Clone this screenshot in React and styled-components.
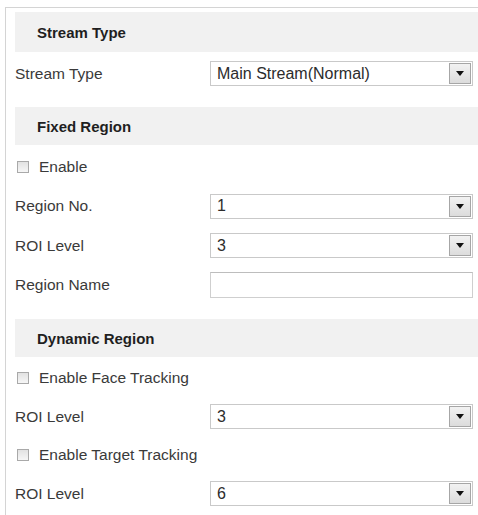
import React from 'react'
import styled, { createGlobalStyle } from 'styled-components'

const GlobalStyle = createGlobalStyle`
    html, body {
        margin: 0;
        padding: 0;
        background: #ffffff;
    }
    body {
        font-family: "Liberation Sans", Arial, sans-serif;
        overflow: hidden;
    }
`

const Page = styled.div`
    width: 478px;
    height: 515px;
    overflow: hidden;
    padding-top: 7px;
    box-sizing: border-box;
`

const Frame = styled.div`
    margin-left: 5px;
    border-top: 1px solid #d4d4d4;
    border-left: 1px solid #d4d4d4;
    padding: 4px 0 0 9px;
    height: 100%;
    box-sizing: border-box;
`

const Section = styled.div`
    margin-bottom: ${props => props.gap || 0}px;
`

const Header = styled.div`
    height: ${props => props.h || 39}px;
    background: #f1f1f1;
    display: flex;
    align-items: center;
    padding-left: 22px;
    font-size: 15px;
    font-weight: 700;
    color: #1f1f1f;
    margin-bottom: 2px;
`

const Row = styled.div`
    height: ${props => props.h || 39}px;
    display: flex;
    align-items: center;
    padding-right: 5px;
`

const Label = styled.span`
    width: 195px;
    font-size: 15.5px;
    color: #3a3a3a;
`

const CheckRow = styled.label`
    display: flex;
    align-items: center;
    font-size: 15.5px;
    color: #3a3a3a;
`

const Box = styled.span`
    width: 10px;
    height: 10px;
    margin: 0 10px 0 2px;
    border: 1px solid #a9a9a9;
    background: linear-gradient(#e2e2e2, #f6f6f6);
`

const Select = styled.div`
    flex: 1;
    height: 25px;
    box-sizing: border-box;
    border: 1px solid #c9c9c9;
    display: flex;
    align-items: center;
    background: #fff;
    font-size: 16px;
    color: #2c2c2c;
`

const Value = styled.span`
    flex: 1;
    padding-left: 6px;
`

const Arrow = styled.span`
    width: 22px;
    height: 21px;
    margin-right: 1px;
    box-sizing: border-box;
    border: 1px solid #a6a6a6;
    background: linear-gradient(#f2f2f2, #dcdcdc);
    display: flex;
    align-items: center;
    justify-content: center;
`

const TextInput = styled.div`
    flex: 1;
    height: 26px;
    box-sizing: border-box;
    border: 1px solid #cfcfcf;
    border-top-color: #bdbdbd;
    background: #fff;
`

function Dropdown({ value }) {
    return (
        <Select>
            <Value>{value}</Value>
            <Arrow>
                <svg width="8" height="5" viewBox="0 0 8 5">
                    <path d="M0 0 H8 L4 5 Z" fill="#111" />
                </svg>
            </Arrow>
        </Select>
    )
}

function Check({ children }) {
    return (
        <CheckRow>
            <Box />
            {children}
        </CheckRow>
    )
}

export default function App() {
    return (
        <Page>
            <GlobalStyle />
            <Frame>
                <Section gap={14}>
                    <Header h={40}>Stream Type</Header>
                    <Row>
                        <Label>Stream Type</Label>
                        <Dropdown value="Main Stream(Normal)" />
                    </Row>
                </Section>
                <Section gap={14}>
                    <Header h={38}>Fixed Region</Header>
                    <Row h={39.5}>
                        <Check>Enable</Check>
                    </Row>
                    <Row h={39.5}>
                        <Label>Region No.</Label>
                        <Dropdown value="1" />
                    </Row>
                    <Row h={39.5}>
                        <Label>ROI Level</Label>
                        <Dropdown value="3" />
                    </Row>
                    <Row h={39.5}>
                        <Label>Region Name</Label>
                        <TextInput />
                    </Row>
                </Section>
                <Section>
                    <Header h={38}>Dynamic Region</Header>
                    <Row h={38.5}>
                        <Check>Enable Face Tracking</Check>
                    </Row>
                    <Row h={38.5}>
                        <Label>ROI Level</Label>
                        <Dropdown value="3" />
                    </Row>
                    <Row h={38.5}>
                        <Check>Enable Target Tracking</Check>
                    </Row>
                    <Row h={38.5}>
                        <Label>ROI Level</Label>
                        <Dropdown value="6" />
                    </Row>
                </Section>
            </Frame>
        </Page>
    )
}
